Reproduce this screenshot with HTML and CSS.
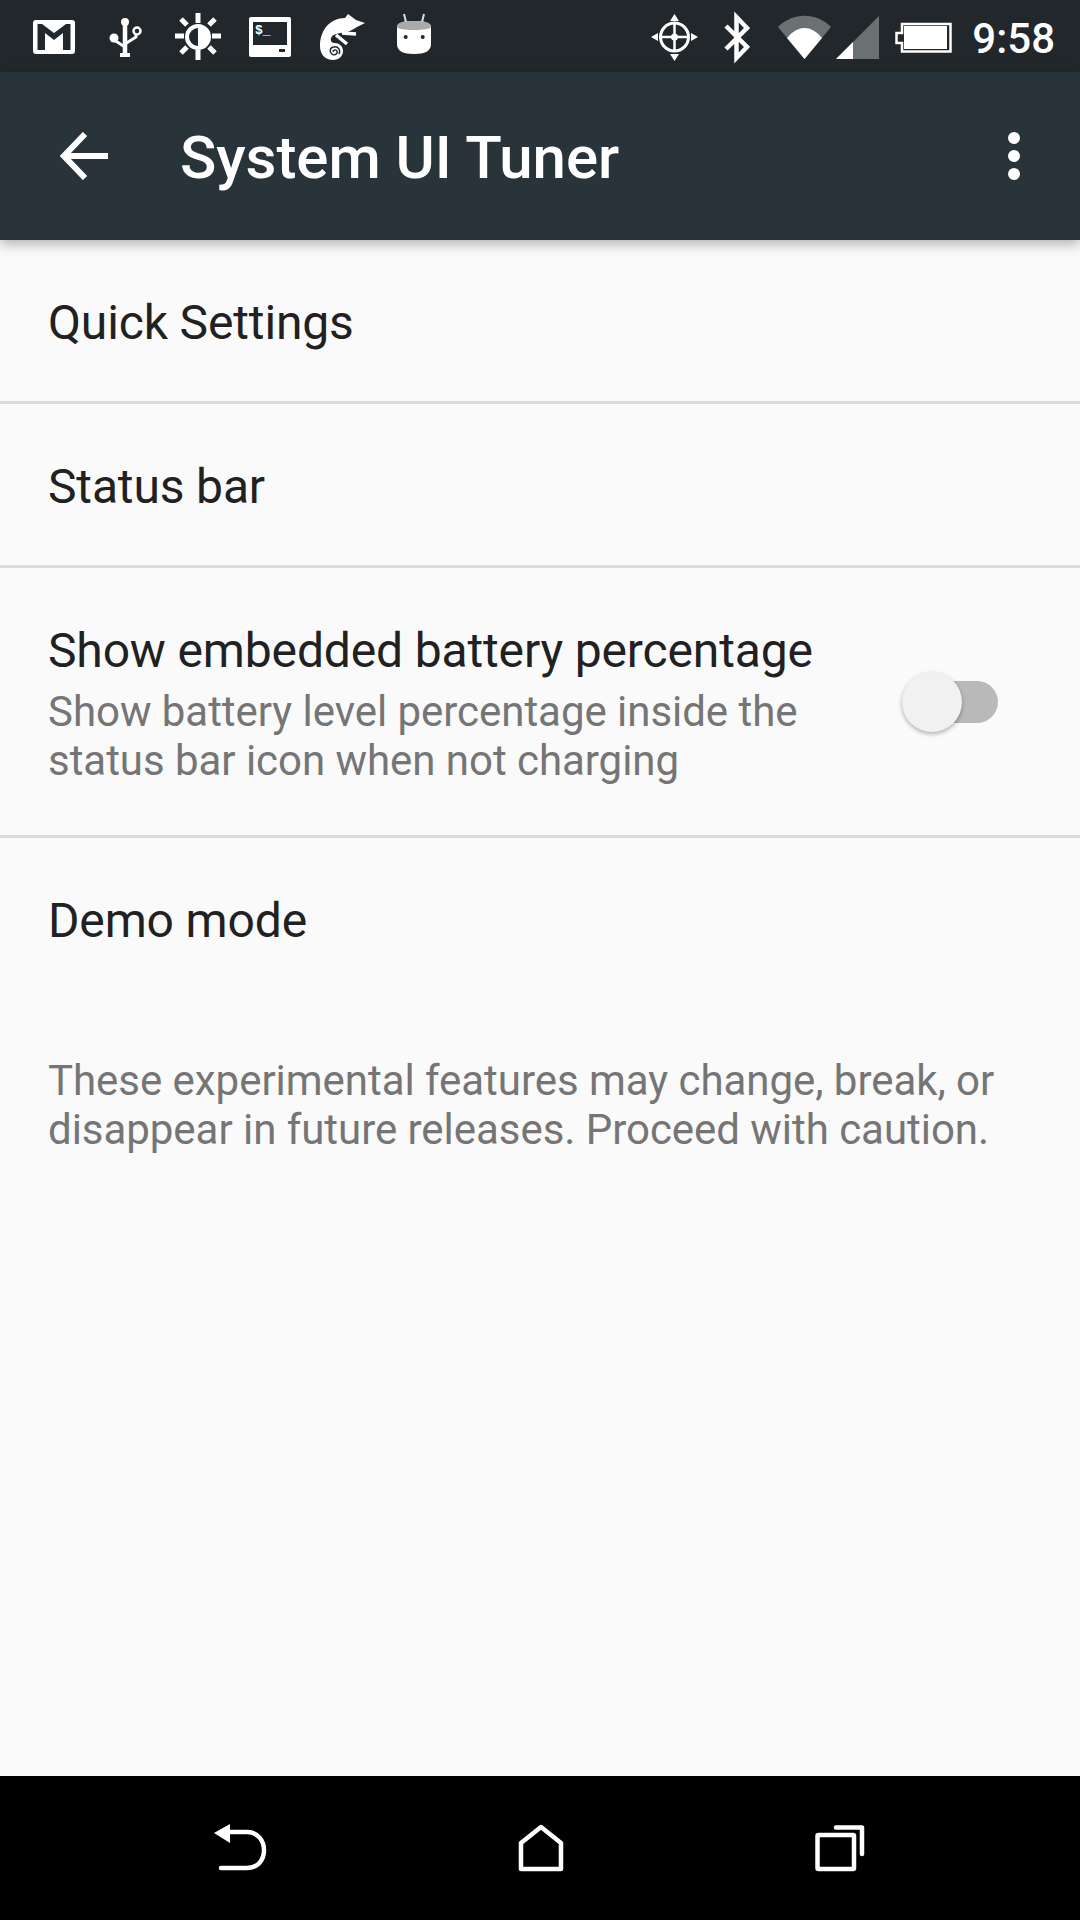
FILE: index.html
```html
<!DOCTYPE html>
<html lang="en">
<head>
    <meta charset="UTF-8">
    <title>System UI Tuner</title>
    <link rel="stylesheet" href="styles.css">
</head>
<body>
    <div class="statusbar">
        <div class="status-left">
            <!-- gmail -->
            <svg class="slot" width="72" height="72" viewBox="0 0 72 72">
                <rect x="15" y="20" width="42" height="34" rx="3" fill="#fff"/>
                <path d="M19.500 50V24H24L36 33L48 24H52.500V50H45V33L36 40L27 33V50Z" fill="#21272b"/>
            </svg>
            <!-- usb -->
            <svg class="slot" width="72" height="72" viewBox="0 0 72 72">
                <path d="M35 22V55" stroke="#fff" stroke-width="4.5"/>
                <path d="M30 55H40" stroke="#fff" stroke-width="4"/>
                <circle cx="35" cy="22" r="4" fill="#fff"/>
                <circle cx="24" cy="38" r="4.5" fill="#fff"/>
                <path d="M24 38V40L35 47M46 34V37L35 44" fill="none" stroke="#fff" stroke-width="3"/>
                <circle cx="47" cy="31" r="3.5" fill="none" stroke="#fff" stroke-width="2.5"/>
            </svg>
            <!-- brightness -->
            <svg class="slot" width="72" height="72" viewBox="0 0 72 72">
                <path d="M36 13V23M36 50V60M13 36H22M50 36H59M19 19L25 25M47 47L53 53M53 19L47 25M25 47L19 53" stroke="#fff" stroke-width="5"/>
                <circle cx="36" cy="37" r="11" fill="none" stroke="#fff" stroke-width="4"/>
                <path d="M36 26A11 11 0 0 1 36 48Z" fill="#fff"/>
            </svg>
            <!-- terminal -->
            <svg class="slot" width="72" height="72" viewBox="0 0 72 72">
                <rect x="15" y="17" width="42" height="40" rx="2" fill="#fff"/>
                <rect x="19" y="22" width="34" height="23" fill="#21272b"/>
                <rect x="45" y="49" width="6" height="3" fill="#21272b"/>
                <text x="21" y="34" class="prompt">$_</text>
            </svg>
            <!-- chameleon -->
            <svg class="slot" width="72" height="72" viewBox="0 0 72 72">
                <path d="M59 23L50 20L42 14L39 18C24 18 14 30 14 46C14 55 20 60 27 60C33 60 37 56 37 51C37 46 33 43 29 43C26 43 24 41 25 38C27 33 36 33 42 32C46 30 49 28 51 27Z" fill="#fff"/>
                <path d="M36 33L50 34M30 35L41 44" stroke="#fff" stroke-width="3.5" fill="none"/>
                <path d="M27 52C27 50 30 49 31 51C32 54 28 56 26 54C23 52 24 47 28 47C32 46 35 50 33 54" fill="none" stroke="#21272b" stroke-width="1.4"/>
            </svg>
            <!-- android m -->
            <svg class="slot" width="72" height="72" viewBox="0 0 72 72">
                <path d="M26 14L28 22M46 14L44 22" stroke="#ddd" stroke-width="2"/>
                <path d="M19 27C19 22 27 21 36 21C45 21 53 22 53 27V44C53 51 47 54 36 54C25 54 19 51 19 44Z" fill="#fff"/>
                <path d="M19 27C19 22 27 21 36 21C45 21 53 22 53 27C53 29 45 30 36 30C27 30 19 29 19 27Z" fill="#aaa"/>
                <circle cx="27.700" cy="37" r="2" fill="#21272b"/>
                <circle cx="44.700" cy="37" r="2" fill="#21272b"/>
            </svg>
        </div>
        <div class="status-right">
            <!-- gps -->
            <svg class="ico-gps" width="47" height="72" viewBox="0 0 47 72">
                <circle cx="23.5" cy="37" r="14" fill="none" stroke="#fff" stroke-width="3"/>
                <path d="M23.5 23V51M9.5 37H37.5" stroke="#fff" stroke-width="2.5"/>
                <circle cx="23.5" cy="37" r="3.5" fill="#fff"/>
                <path d="M23.5 14L28 21H19ZM23.5 61L28 54H19ZM0 37L7 33V41ZM47 37L40 33V41Z" fill="#fff"/>
            </svg>
            <!-- bluetooth -->
            <svg class="ico-bt" width="26" height="72" viewBox="0 0 26 72">
                <path d="M2 26L23 47L12.5 58V17L23 28L2 49" fill="none" stroke="#fff" stroke-width="4.5"/>
            </svg>
            <!-- wifi -->
            <svg class="ico-wifi" width="53" height="72" viewBox="0 0 53 72">
                <path d="M0 27C15 12 38 12 53 27L26.500 59Z" fill="#6b7073"/>
                <path d="M9 38C20 24.700 33 24.700 44 38L26.500 59Z" fill="#fff"/>
            </svg>
            <!-- signal -->
            <svg class="ico-signal" width="43" height="72" viewBox="0 0 43 72">
                <path d="M0 59L43 16V59Z" fill="#6b7073"/>
                <path d="M0 59L17 42V59Z" fill="#fff"/>
            </svg>
            <!-- battery -->
            <svg class="ico-batt" width="57" height="72" viewBox="0 0 57 72">
                <path d="M1.500 33H7V24H55.500V51.500H7V43H1.500Z" fill="none" stroke="#fff" stroke-width="2.5"/>
                <rect x="9" y="26" width="43" height="23" fill="#fff"/>
            </svg>
            <span class="clock">9:58</span>
        </div>
    </div>

    <div class="toolbar">
        <svg class="nav-up" width="48" height="48" viewBox="0 0 48 48">
            <path d="M48 24H5M25 2L4 24L25 46" fill="none" stroke="#fff" stroke-width="6"/>
        </svg>
        <div class="toolbar-title">System UI Tuner</div>
        <div class="overflow">
            <span class="dot"></span>
            <span class="dot"></span>
            <span class="dot"></span>
        </div>
    </div>

    <div class="content">
        <div class="row row-plain">
            <div class="row-title">Quick Settings</div>
        </div>
        <div class="row row-plain">
            <div class="row-title">Status bar</div>
        </div>
        <div class="row row-switch">
            <div class="row-text">
                <div class="row-title">Show embedded battery percentage</div>
                <div class="row-summary">Show battery level percentage inside the<br>status bar icon when not charging</div>
            </div>
            <div class="switch">
                <div class="switch-thumb"></div>
            </div>
        </div>
        <div class="row row-plain row-last">
            <div class="row-title">Demo mode</div>
        </div>
        <div class="footer-note">These experimental features may change, break, or<br>disappear in future releases. Proceed with caution.</div>
    </div>

    <div class="navbar">
        <svg width="54" height="50" viewBox="0 0 54 50">
            <path d="M16 8H33C44 8 50 17 50 26C50 36 44 44 33 44H7" fill="none" stroke="#fff" stroke-width="4.5" stroke-linecap="round"/>
            <path d="M0 9L16 0V19Z" fill="#fff"/>
        </svg>
        <svg width="46" height="50" viewBox="0 0 46 50">
            <path d="M23 3L43 19V45H3V19Z" fill="none" stroke="#fff" stroke-width="4.5" stroke-linejoin="round"/>
        </svg>
        <svg width="52" height="50" viewBox="0 0 52 50">
            <rect x="3.500" y="11" width="36.500" height="34" rx="1" fill="none" stroke="#fff" stroke-width="4.5" stroke-linejoin="round"/>
            <path d="M22 3.500H48V30" fill="none" stroke="#fff" stroke-width="4.5" stroke-linecap="round" stroke-linejoin="round"/>
        </svg>
    </div>
</body>
</html>
```

FILE: styles.css
```css
body {
    font-family: Roboto, "Liberation Sans", sans-serif;
    margin: 0;
    width: 1080px;
    height: 1920px;
    display: flex;
    flex-direction: column;
    background: #fafafa;
    overflow: hidden;
}
.statusbar {
    height: 72px;
    background: #21272b;
    display: flex;
    justify-content: space-between;
    flex-shrink: 0;
}
.status-left {
    display: flex;
    padding-left: 18px;
}
.status-right {
    display: flex;
    align-items: center;
    padding-right: 25px;
}
.slot, .status-right svg {
    display: block;
}
.prompt {
    font-family: "Liberation Mono", monospace;
    font-size: 13px;
    font-weight: bold;
    fill: #fff;
}
.ico-bt {
    margin-left: 26px;
}
.ico-wifi {
    margin-left: 28px;
}
.ico-signal {
    margin-left: 5px;
}
.ico-batt {
    margin-left: 16px;
}
.clock {
    margin-left: 20px;
    color: #fff;
    font-size: 42px;
    font-weight: 500;
    line-height: 72px;
    padding-top: 6px;
}
.toolbar {
    height: 168px;
    background: #29333a;
    display: flex;
    align-items: center;
    flex-shrink: 0;
    position: relative;
    box-shadow: 0 4px 12px rgba(0,0,0,0.3);
}
.nav-up {
    margin-left: 60px;
}
.toolbar-title {
    margin-left: 72px;
    padding-top: 2px;
    color: #fff;
    font-size: 60px;
    font-weight: 500;
    letter-spacing: -0.05px;
    flex: 1;
}
.overflow {
    width: 12px;
    margin-right: 60px;
    display: flex;
    flex-direction: column;
    gap: 6px;
}
.dot {
    width: 12px;
    height: 12px;
    border-radius: 50%;
    background: #fff;
}
.content {
    flex: 1;
}
.row {
    display: flex;
    align-items: center;
    padding: 0 48px;
    border-bottom: 3px solid #dcdcdc;
    box-sizing: border-box;
}
.row-plain {
    height: 164px;
    padding-top: 5px;
}
.row-switch {
    height: 270px;
    padding-top: 5px;
    justify-content: space-between;
}
.row-last {
    border-bottom: none;
    padding-top: 2px;
}
.row-title {
    font-size: 48px;
    color: #212121;
    line-height: 56px;
    letter-spacing: -0.15px;
}
.row-summary {
    margin-top: 8px;
    font-size: 42px;
    color: #757575;
    line-height: 49px;
    letter-spacing: -0.04px;
}
.switch {
    position: relative;
    width: 92px;
    height: 42px;
    margin-right: 34px;
    margin-bottom: 4px;
    border-radius: 21px;
    background: #b9b9b9;
}
.switch-thumb {
    position: absolute;
    left: -4px;
    top: -9px;
    width: 60px;
    height: 60px;
    border-radius: 50%;
    background: #f1f1f1;
    box-shadow: 0 2px 4px rgba(0,0,0,0.3);
}
.footer-note {
    padding: 54px 48px 0;
    font-size: 42px;
    line-height: 49px;
    letter-spacing: -0.04px;
    color: #757575;
}
.navbar {
    height: 144px;
    background: #000;
    display: flex;
    align-items: flex-start;
    flex-shrink: 0;
    justify-content: center;
    gap: 250px;
    padding-top: 48px;
    box-sizing: border-box;
}
```
